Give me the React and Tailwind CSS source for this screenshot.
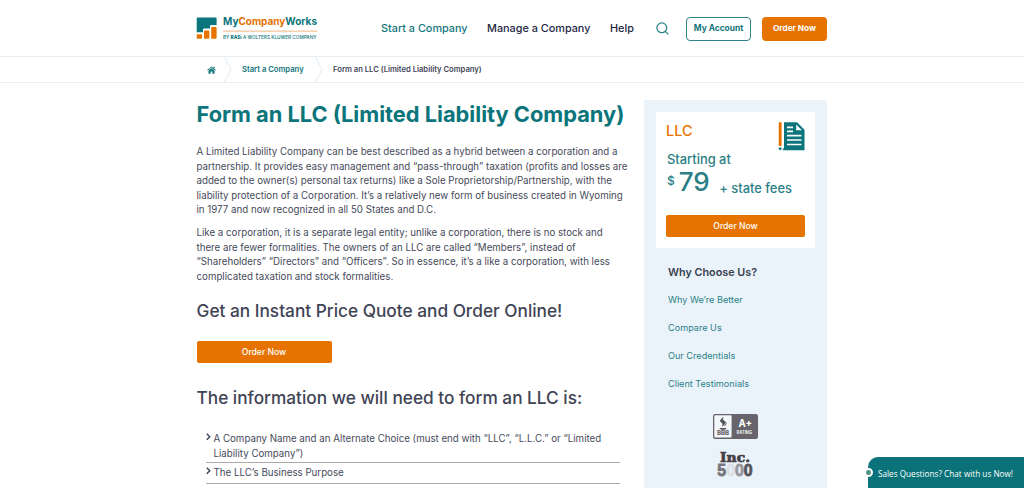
import React from "react";

const navItems = [
  { label: "Start a Company", className: "w-[106px] text-[#12757b]" },
  { label: "Manage a Company", className: "w-[123px] text-[#22263f]" },
  { label: "Help", className: "w-[46px] text-[#22263f]" },
];

const sidebarLinks = ["Why We’re Better", "Compare Us", "Our Credentials", "Client Testimonials"];

const Logo = () => (
  <svg width="122" height="35" viewBox="0 -5 122 35" className="block overflow-visible">
    <path d="M1.7 1.4H19.6Q20.6 1.4 20.6 2.4V9H15.2Q14 9 14 10.2V12.4H8.2Q7 12.4 7 13.6V16.2H0.7V2.4Q0.7 1.4 1.7 1.4Z" fill="#0b757b" />
    <rect x="0.7" y="18.2" width="5.4" height="4.5" rx="0.8" fill="#e67300" />
    <rect x="8" y="14.6" width="5.4" height="8.1" rx="0.8" fill="#e67300" />
    <rect x="15.2" y="11" width="5.4" height="11.7" rx="0.8" fill="#e67300" />
    <text x="27" y="9.2" fontSize="10.4" fontWeight="700" textLength="94" lengthAdjust="spacingAndGlyphs" fill="#0b757b">
      My<tspan fill="#e67300">Company</tspan>Works
    </text>
    <rect x="27" y="14.6" width="94" height="1" fill="#f0b583" />
    <text x="27" y="22.6" fontSize="5" fontWeight="500" textLength="93.5" lengthAdjust="spacingAndGlyphs" fill="#0b757b">
      BY <tspan fontWeight="800">RASi</tspan> A WOLTERS KLUWER COMPANY
    </text>
  </svg>
);

const DocumentIcon = () => (
  <svg width="27" height="29" viewBox="0 0 27 29" className="block">
    <rect x="0.7" y="0.3" width="2.9" height="23.7" rx="0.7" fill="#e67300" />
    <path d="M0.7 25.5H3.6V27L2.1 28.5L0.7 27Z" fill="#0b757b" />
    <path d="M6 0.3H19L26.5 7.8V28.2H4.8V26.6H6Z" fill="#0b757b" />
    <path d="M18.2 2.6V8.3H24Z" fill="#fff" />
    <path d="M9 5.3H15M9 9.3H15M9 13.6H23.5M9 18H23.5M9 22.5H23.5" stroke="#fff" strokeWidth="1.7" />
  </svg>
);

const BbbBadge = () => (
  <svg width="45" height="25" viewBox="0 0 45 25" className="block">
    <rect width="45" height="25" rx="2.2" fill="#67656b" />
    <rect x="1.3" y="1.3" width="17.3" height="22.3" rx="1" fill="#f4f7f9" />
    <path d="M9.8 3.4L7.6 6.2Q7 7.4 8.2 8.2L9.6 9.2Q10.4 10 9.4 12L12 9.6Q13 8.2 11.6 7.2L10 6.2Q9.2 5.4 9.8 3.4Z" fill="#555359" stroke="#555359" strokeWidth="0.8" />
    <path d="M12.6 8Q14.2 9.4 11.4 12.2" fill="none" stroke="#555359" strokeWidth="0.8" />
    <path d="M6.2 14H13.8L11.8 15.8H8.2Z" fill="#555359" />
    <text x="4" y="21.2" fontSize="5.8" fontWeight="800" textLength="12" lengthAdjust="spacingAndGlyphs" fill="#67656b">BBB</text>
    <text x="25.5" y="13" fontSize="10" fontWeight="700" textLength="13.5" lengthAdjust="spacingAndGlyphs" fill="#fff">A+</text>
    <text x="23.5" y="19.7" fontSize="4.5" fontWeight="700" textLength="15.5" lengthAdjust="spacingAndGlyphs" fill="#eee">RATING</text>
  </svg>
);

const IncBadge = () => (
  <svg width="37" height="27" viewBox="0 0 37 27" className="block overflow-visible">
    <text x="3" y="10.2" fontFamily="'DejaVu Serif', serif" fontSize="13" fontWeight="700" textLength="30" lengthAdjust="spacingAndGlyphs" fill="#453f47" stroke="#453f47" strokeWidth="0.7">Inc.</text>
    <text x="0.3" y="23.8" fontFamily="'Liberation Sans', sans-serif" fontSize="16.5" fontWeight="700" textLength="35.4" lengthAdjust="spacingAndGlyphs" fill="#77757d" strokeWidth="0.8">
      <tspan stroke="#77757d">5</tspan>
      <tspan fill="#dce1e8" stroke="#dce1e8">0</tspan>
      <tspan fill="#98979e" stroke="#98979e">0</tspan>
      <tspan fill="#57535b" stroke="#57535b">0</tspan>
    </text>
  </svg>
);

const Separator = () => (
  <svg width="8" height="25" viewBox="0 0 8 25" className="block shrink-0">
    <path d="M0.5 0L7 12.5L0.5 25" fill="none" stroke="#dfeaf3" strokeWidth="1" />
  </svg>
);

const ListItem = ({ children }) => (
  <li className="flex border-b border-[#aaaaaa]">
    <svg width="5" height="8" viewBox="0 0 5 8" className="mt-px mr-[3px] shrink-0">
      <path d="M0.8 0.8L3.8 3.8L0.8 6.8" fill="none" stroke="#363b4d" strokeWidth="1.3" />
    </svg>
    <span>{children}</span>
  </li>
);

const App = () => {
  return (
    <div className="h-[488px] overflow-hidden bg-white font-['Inter',sans-serif] text-[#454a5a]">
      {/* Header */}
      <header className="flex h-[57px] items-center border-b border-[#e6eff6] pl-[196px] whitespace-nowrap">
        <Logo />
        <nav className="ml-[63px] flex pt-px text-[10.85px] font-medium">
          {navItems.map((item) => (
            <a key={item.label} className={item.className}>{item.label}</a>
          ))}
        </nav>
        <svg width="13" height="13" viewBox="0 0 13 13" className="shrink-0">
          <circle cx="5.8" cy="5.8" r="4.9" fill="none" stroke="#2c848a" strokeWidth="1.3" />
          <path d="M9.4 9.4L12.2 12.2" stroke="#2c848a" strokeWidth="1.3" />
        </svg>
        <button className="mt-px ml-[17px] h-[24px] w-[65px] rounded border border-[#2c848a] text-[8.4px] font-bold text-[#12757b]">
          My Account
        </button>
        <button className="mt-px ml-[11px] h-[24px] w-[65px] rounded bg-[#e67300] text-[8.2px] font-bold text-white">
          Order Now
        </button>
      </header>

      {/* Breadcrumb */}
      <div className="flex h-[26px] items-center border-b border-[#e6eff6] pl-[207px] text-[7.65px] font-semibold whitespace-nowrap">
        <svg width="9" height="8" viewBox="0 0 18 16" className="mr-[8px] shrink-0" fill="#12757b">
          <path d="M9 1L0.5 8L1.6 9.3L9 3.2L16.4 9.3L17.5 8L15 5.9V1.5H12.7V4Z" />
          <path d="M3 9.6L9 4.7L15 9.6V15.5H10.8V11H7.2V15.5H3Z" />
        </svg>
        <Separator />
        <a className="ml-[10px] w-[73px] text-[#12757b]">Start a Company</a>
        <Separator />
        <span className="ml-[10px] text-[#42475a]">Form an LLC (Limited Liability Company)</span>
      </div>

      <div className="flex pl-[196px]">
        <main className="w-[448px] pt-[15px] pl-[0.5px] text-[9.72px] leading-[14.6px] whitespace-nowrap">
          <h1 className="text-[21.8px] leading-[32px] font-bold text-[#0b757b]">
            Form an LLC (Limited Liability Company)
          </h1>
          <p className="mt-[15px]">
            A Limited Liability Company can be best described as a hybrid between a corporation and a<br />
            partnership. It provides easy management and “pass-through” taxation (profits and losses are<br />
            added to the owner(s) personal tax returns) like a Sole Proprietorship/Partnership, with the<br />
            liability protection of a Corporation. It’s a relatively new form of business created in Wyoming<br />
            in 1977 and now recognized in all 50 States and D.C.
          </p>
          <p className="mt-[8px]">
            Like a corporation, it is a separate legal entity; unlike a corporation, there is no stock and<br />
            there are fewer formalities. The owners of an LLC are called “Members”, instead of<br />
            “Shareholders” “Directors” and “Officers”. So in essence, it’s a like a corporation, with less<br />
            complicated taxation and stock formalities.
          </p>
          <h2 className="mt-[14.6px] text-[17.25px] leading-[24px] font-medium text-[#3f4455]">
            Get an Instant Price Quote and Order Online!
          </h2>
          <button className="mt-[18px] block h-[22px] w-[135px] rounded-[2px] bg-[#e67300] text-[8.6px] font-medium text-white">
            Order Now
          </button>
          <h2 className="mt-[23px] text-[17.25px] leading-[24px] font-medium text-[#3f4455]">
            The information we will need to form an LLC is:
          </h2>
          <ul className="mt-[22px] ml-[9px] w-[414px]">
            <ListItem>
              <span className="block pb-px">
                A Company Name and an Alternate Choice (must end with “LLC”, “L.L.C.” or “Limited<br />
                Liability Company”)
              </span>
            </ListItem>
            <li className="h-[3px]" />
            <ListItem>
              <span className="block pb-[2px]">The LLC’s Business Purpose</span>
            </ListItem>
          </ul>
        </main>

        {/* Sidebar */}
        <aside className="mt-[17px] h-[400px] w-[183px] rounded-t-[2px] bg-[#ebf3fa] px-[12px] pt-[12px] whitespace-nowrap">
          <div className="h-[136px] w-[159px] bg-white pt-[10px] pr-[11px] pl-[11px] text-[#2a8086]">
            <div className="flex h-[29px] justify-between">
              <span className="ml-[-1px] text-[14.5px] leading-[18px] font-medium text-[#e67300]">LLC</span>
              <span className="mr-[-1px]"><DocumentIcon /></span>
            </div>
            <div className="text-[12.9px] leading-[17px] font-medium">Starting at</div>
            <div className="flex h-[27px] font-medium">
              <span className="mt-[5px] text-[12px] leading-[15px]">$</span>
              <span className="ml-[4px] text-[26px] leading-[27px]">79</span>
              <span className="mt-[12px] ml-[9.5px] text-[12.9px] leading-[17px]">+ state fees</span>
            </div>
            <button className="mt-[20px] ml-[-1px] block h-[22px] w-[139px] rounded-[2px] bg-[#e67300] text-[8.6px] font-medium text-white">
              Order Now
            </button>
          </div>
          <h3 className="mt-[16px] ml-[12px] text-[10.8px] leading-[17px] font-semibold text-[#3a3f51]">
            Why Choose Us?
          </h3>
          <div className="mt-[5.4px] ml-[12px] flex flex-col text-[9.15px] leading-[27.7px] text-[#2a8086]">
            {sidebarLinks.map((link) => (
              <a key={link}>{link}</a>
            ))}
          </div>
          <div className="mt-[16.6px] ml-[57px]">
            <BbbBadge />
          </div>
          <div className="mt-[13px] ml-[61px]">
            <IncBadge />
          </div>
        </aside>
      </div>

      {/* Chat tab */}
      <div className="fixed right-0 bottom-0 flex h-[31px] w-[156px] items-center rounded-tl-[10px] bg-[#0a7278] pt-[3px] pl-[10px] font-['Open_Sans',sans-serif] text-[8.2px] whitespace-nowrap text-white">
        <span className="absolute top-[11px] left-[-4px] size-[9px] rounded-full border-2 border-white bg-[#4d9288]" />
        Sales Questions? Chat with us Now!
      </div>
    </div>
  );
};

export default App;
